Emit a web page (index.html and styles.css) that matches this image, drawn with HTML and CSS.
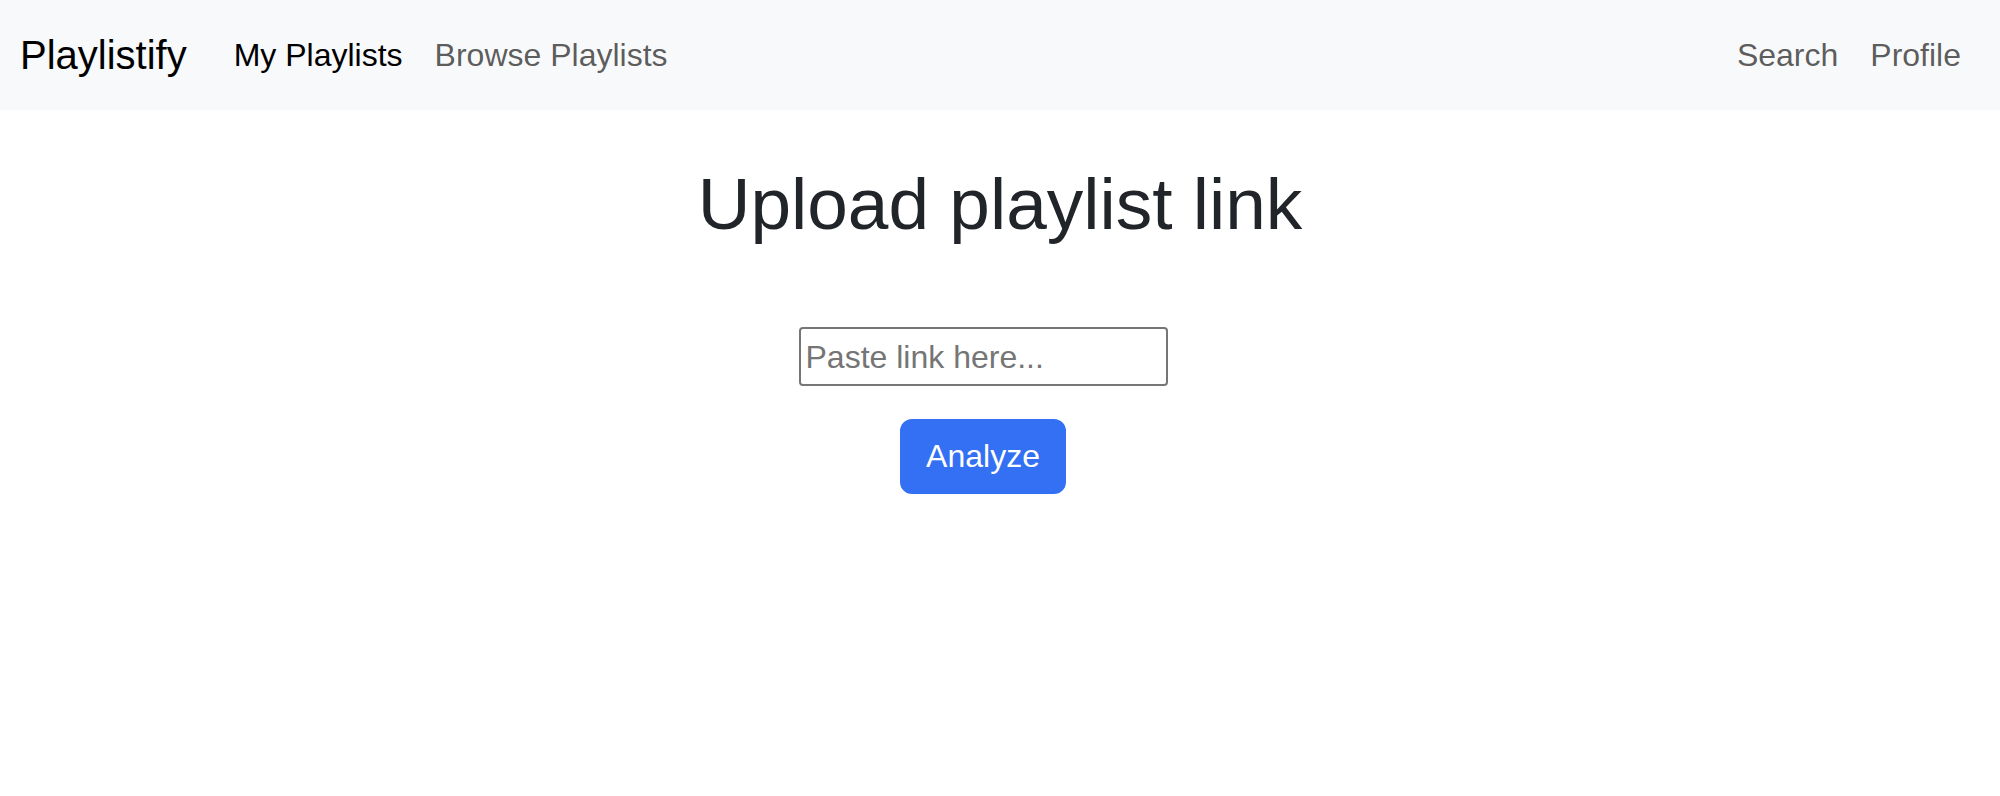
FILE: index.html
```html
<!DOCTYPE html>
<html lang="en">
<head>
<meta charset="utf-8">
<title>Playlistify</title>
<link rel="stylesheet" href="styles.css">
</head>
<body>
<nav class="navbar">
  <a class="brand" href="#">Playlistify</a>
  <ul class="nav">
    <li><a class="nav-link active" href="#">My Playlists</a></li>
    <li><a class="nav-link" href="#">Browse Playlists</a></li>
  </ul>
  <ul class="nav nav-right">
    <li><a class="nav-link" href="#">Search</a></li>
    <li><a class="nav-link" href="#">Profile</a></li>
  </ul>
</nav>
<main class="main">
  <h1 class="title">Upload playlist link</h1>
  <form class="upload-form">
    <input class="link-input" type="text" placeholder="Paste link here...">
    <button class="btn-primary" type="button">Analyze</button>
  </form>
</main>
</body>
</html>
```
FILE: styles.css
```css
* { box-sizing: border-box; }
html, body {
  margin: 0;
  padding: 0;
  background: #ffffff;
  font-family: "Liberation Sans", Arial, sans-serif;
  color: #212529;
}
.navbar {
  height: 110px;
  background: #f8f9fa;
  display: flex;
  align-items: center;
  padding: 0 23px 0 20px;
}
.brand {
  font-size: 40px;
  line-height: 60px;
  color: #000000;
  text-decoration: none;
  margin-right: 31px;
}
.nav {
  list-style: none;
  margin: 0;
  padding: 0;
  display: flex;
  align-items: center;
}
.nav-right { margin-left: auto; }
.nav-link {
  display: block;
  padding: 0 16px;
  font-size: 32px;
  line-height: 48px;
  color: rgba(0, 0, 0, 0.65);
  text-decoration: none;
}
.nav-link.active { color: #000000; }
.title {
  margin: 50px 0 0;
  font-size: 73px;
  font-weight: 500;
  line-height: 1.2;
  text-align: center;
  color: #212529;
}
.upload-form {
  margin-top: 79px;
  display: flex;
  flex-direction: column;
  align-items: center;
  padding-right: 34px;
}
.link-input {
  width: 369px;
  height: 59px;
  border: 2px solid #767676;
  border-radius: 4px;
  padding: 2px 5px 0;
  font-family: "Liberation Sans", Arial, sans-serif;
  font-size: 32px;
  color: #212529;
  background: #ffffff;
}
.link-input::placeholder { color: #757575; }
.btn-primary {
  margin-top: 33px;
  padding: 12px 24px;
  border: 2px solid #3370f4;
  border-radius: 12px;
  background: #3370f4;
  color: #ffffff;
  font-family: "Liberation Sans", Arial, sans-serif;
  font-size: 32px;
  line-height: 47px;
}
```
